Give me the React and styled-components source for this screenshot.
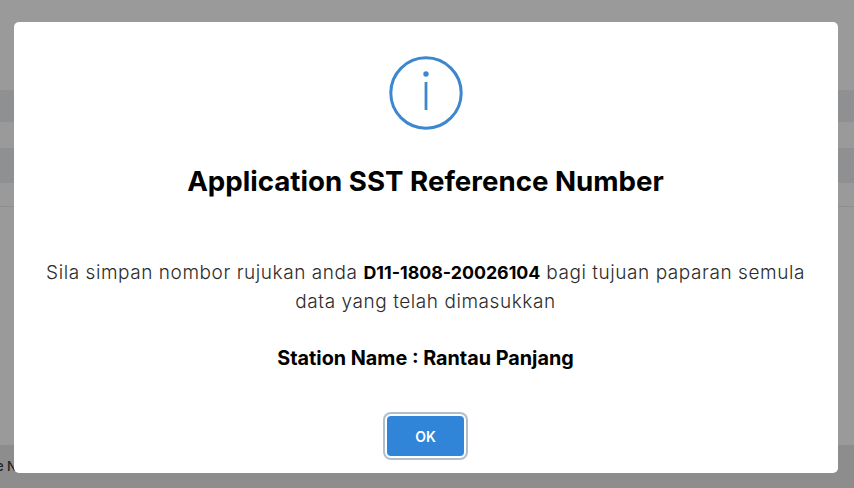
import React from 'react';
import styled, { createGlobalStyle } from 'styled-components';

const Global = createGlobalStyle`
  html, body { margin: 0; height: 100%; overflow: hidden; background: #999; }
  body { font-family: "Inter", "Liberation Sans", sans-serif; }
`;

const Page = styled.div`
  width: 854px;
  height: 488px;
  display: flex;
  flex-direction: column;
  overflow: hidden;
  background: #9a9a9a;
`;

const Band = styled.div`
  height: ${(p) => p.$h}px;
  flex: none;
  background: ${(p) => p.$bg || 'transparent'};
  border-bottom: ${(p) => (p.$line ? '1px solid #8f8f8f' : 'none')};
`;

const Footer = styled.div`
  flex: 1;
  background: #8d8d8d;
  display: flex;
  align-items: center;
  font-size: 13px;
  font-weight: 500;
  color: #222;
  padding-bottom: 2px;
  margin-left: -42px;
`;

const Modal = styled.div`
  position: fixed;
  left: 13.5px;
  top: 22px;
  width: 824px;
  height: 451px;
  box-sizing: border-box;
  background: #fff;
  border-radius: 5px;
  display: flex;
  flex-direction: column;
  align-items: center;
  padding-top: 34px;
  color: #000;
`;

const InfoIcon = styled.svg`
  width: 74px;
  height: 74px;
  flex: none;
  display: block;
`;

const Title = styled.h2`
  margin: 35px 0 0;
  font-size: 27.7px;
  line-height: 32px;
  font-weight: 700;
  white-space: nowrap;
`;

const Message = styled.p`
  margin: 61px 0 0;
  width: 780px;
  text-align: center;
  font-size: 19px;
  line-height: 29px;
  font-weight: 300;
  letter-spacing: 0.56px;
  color: #2b2b2b;
`;

const Code = styled.b`
  font-size: 17.8px;
  font-weight: 700;
  letter-spacing: 0;
  color: #000;
`;

const Station = styled.p`
  margin: 29px 0 0;
  font-size: 19.8px;
  line-height: 26px;
  font-weight: 700;
  white-space: nowrap;
`;

const OkButton = styled.button`
  margin-top: 45px;
  width: 77px;
  height: 40px;
  border: none;
  border-radius: 4px;
  background: #3085d9;
  color: #fff;
  font-family: inherit;
  font-size: 14px;
  font-weight: 600;
  box-shadow: 0 0 0 2px #fff, 0 0 0 4px #aebfd0;
`;

export default function App() {
  return (
    <>
      <Global />
      <Page>
        <Band $h={90} />
        <Band $h={32} $bg="#8f9091" />
        <Band $h={26} $line />
        <Band $h={34} $bg="#8f9091" />
        <Band $h={23} $line />
        <Band $h={238} />
        <Footer>Vehicle Name</Footer>
      </Page>
      <Modal role="dialog">
        <InfoIcon viewBox="0 0 74 74" fill="none" stroke="#3d87cf">
          <circle cx="37" cy="37" r="35.2" strokeWidth="3" />
          <circle cx="37" cy="18" r="2.7" fill="#3d87cf" stroke="none" />
          <line x1="37" y1="26" x2="37" y2="54" strokeWidth="2.8" />
        </InfoIcon>
        <Title>Application SST Reference Number</Title>
        <Message>
          Sila simpan nombor rujukan anda <Code>D11-1808-20026104</Code> bagi tujuan paparan semula data yang telah dimasukkan
        </Message>
        <Station>Station Name : Rantau Panjang</Station>
        <OkButton>OK</OkButton>
      </Modal>
    </>
  );
}
